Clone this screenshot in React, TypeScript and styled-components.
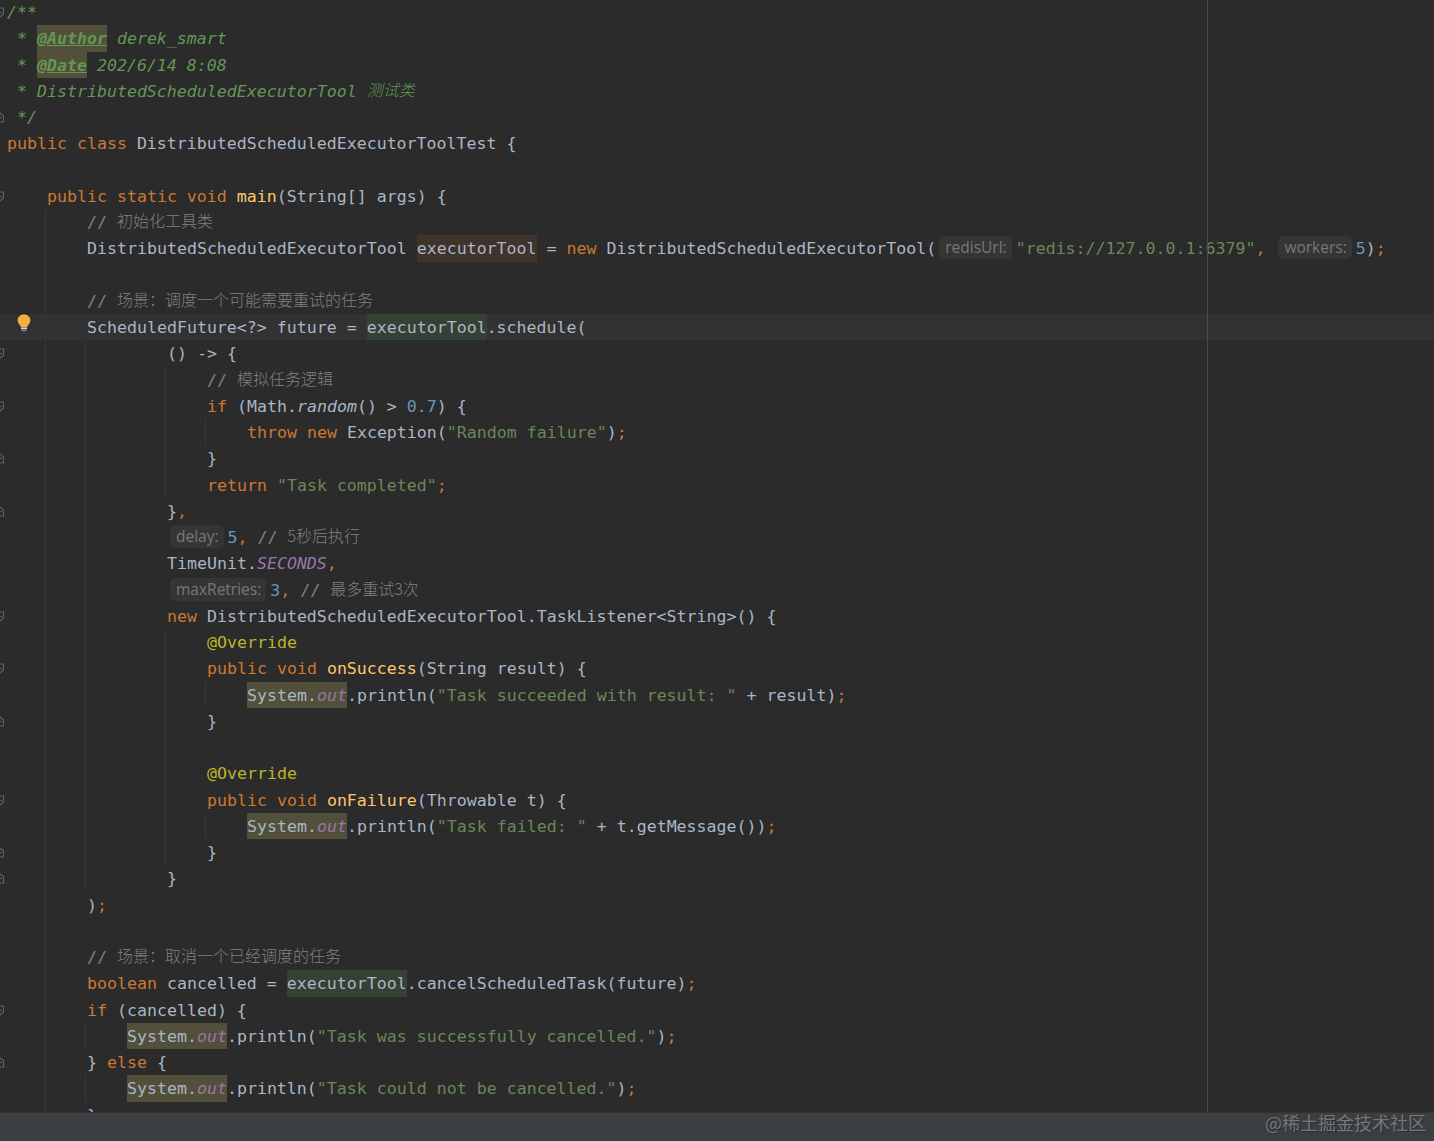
import React from 'react';
import styled, { createGlobalStyle, css } from 'styled-components';

const LINE_HEIGHT = 26.25;
const CHAR_WIDTH = 10;

type Kind =
  | 'plain'
  | 'kw'
  | 'str'
  | 'com'
  | 'cjk'
  | 'doc'
  | 'docTag'
  | 'docCjk'
  | 'num'
  | 'fn'
  | 'ann'
  | 'stat'
  | 'ital'
  | 'hint';
type Mark = 'read' | 'write' | 'search';
type Seg = [Kind, string, Mark?];

interface CodeLine {
  indent?: number;
  segs?: Seg[];
  current?: boolean;
}

const cjkFont = css`
  font-family: 'Noto Sans CJK SC', sans-serif;
  font-size: 16px;
  font-weight: 300;
  line-height: 23.75px;
`;

const kindStyles: Record<Exclude<Kind, 'hint'>, ReturnType<typeof css>> = {
  plain: css`color: #a9b7c6;`,
  kw: css`color: #cc7832;`,
  str: css`color: #6a8759;`,
  com: css`color: #808080;`,
  cjk: css`
    color: #808080;
    ${cjkFont}
  `,
  doc: css`
    color: #629755;
    font-style: italic;
  `,
  docTag: css`
    color: #629755;
    font-style: italic;
    font-weight: 700;
    text-decoration: underline;
  `,
  docCjk: css`
    color: #629755;
    font-style: italic;
    ${cjkFont}
  `,
  num: css`color: #6897bb;`,
  fn: css`color: #ffc66d;`,
  ann: css`color: #bbb529;`,
  stat: css`
    color: #9876aa;
    font-style: italic;
  `,
  ital: css`
    color: #a9b7c6;
    font-style: italic;
  `,
};

const markColors: Record<Mark, string> = {
  read: '#344134',
  write: '#40332b',
  search: '#52503a',
};

const GlobalStyle = createGlobalStyle`
  html, body, #root {
    margin: 0;
    height: 100%;
    background: #2b2b2b;
  }
`;

const Page = styled.div`
  display: flex;
  flex-direction: column;
  height: 100vh;
  overflow: hidden;
`;

const Editor = styled.main`
  position: relative;
  flex: 1;
  min-height: 0;
  overflow: hidden;
  background: #2b2b2b;
`;

const Code = styled.div`
  margin-top: -1px;
  font-family: 'DejaVu Sans Mono', monospace;
  font-size: 16.6px;
`;

// indent guides are painted as 1px stripes behind the text
const guideStripes = (xs: number[]) =>
  xs.length
    ? `background-image: ${xs.map(() => 'linear-gradient(#363636, #363636)').join(', ')};
       background-size: 1px 100%;
       background-repeat: no-repeat;
       background-position: ${xs.map((x) => `${x}px 0`).join(', ')};`
    : '';

const Line = styled.div<{ $current?: boolean; $guides: number[] }>`
  position: relative;
  display: flex;
  height: ${LINE_HEIGHT}px;
  line-height: 27px;
  white-space: pre;
  background-color: ${(p) => (p.$current ? '#323232' : 'transparent')};
  ${(p) => guideStripes(p.$guides)}
`;

const Gutter = styled.div`
  flex: none;
  width: 7px;
`;

const Text = styled.div<{ $indent: number }>`
  padding-left: ${(p) => p.$indent * CHAR_WIDTH}px;
`;

const Token = styled.span<{ $kind: Exclude<Kind, 'hint'>; $mark?: Mark }>`
  display: inline-block;
  height: ${LINE_HEIGHT}px;
  vertical-align: top;
  ${(p) => kindStyles[p.$kind]}
  ${(p) => p.$mark && `background-color: ${markColors[p.$mark]};`}
`;

const Hint = styled.span`
  display: inline-block;
  height: 23px;
  line-height: 22px;
  margin: 1px 4px 0 3px;
  padding: 0 5px 0 6px;
  vertical-align: top;
  border-radius: 5px;
  background: #353535;
  color: #787878;
  font-family: 'Open Sans', sans-serif;
  font-size: 15.5px;
`;

const FoldIcon = styled.svg`
  position: absolute;
  top: 8px;
  left: -5px;
  width: 10px;
  height: 11px;
  fill: none;
  stroke: #626262;
  stroke-width: 1.1;
`;

const BulbIcon = styled.svg`
  position: absolute;
  top: 0;
  left: 17px;
  width: 14px;
  height: 19px;
`;

const MarginLine = styled.div`
  position: absolute;
  top: 0;
  bottom: 0;
  left: 1207px;
  width: 1px;
  background: #4b4b4b;
`;

const StatusBar = styled.footer`
  display: flex;
  flex: none;
  justify-content: flex-end;
  height: 28px;
  padding-right: 8px;
  border-top: 1px solid #313335;
  background: #3c3f41;
`;

const Watermark = styled.span`
  color: #74787a;
  font-family: 'Noto Sans CJK SC', sans-serif;
  font-size: 18px;
  line-height: 18px;
  text-shadow: 1px 1px 1px #2c2e30;
`;

const comma: Seg = ['kw', ','];
const semi: Seg = ['kw', ';'];
const sysOut: Seg[] = [
  ['plain', 'System.', 'search'],
  ['stat', 'out', 'search'],
];

const lines: CodeLine[] = [
  { segs: [['doc', '/**']] },
  { indent: 1, segs: [['doc', '* '], ['docTag', '@Author', 'search'], ['doc', ' derek_smart']] },
  { indent: 1, segs: [['doc', '* '], ['docTag', '@Date', 'search'], ['doc', ' 202/6/14 8:08']] },
  { indent: 1, segs: [['doc', '* DistributedScheduledExecutorTool '], ['docCjk', '测试类']] },
  { indent: 1, segs: [['doc', '*/']] },
  { segs: [['kw', 'public class '], ['plain', 'DistributedScheduledExecutorToolTest {']] },
  {},
  {
    indent: 4,
    segs: [['kw', 'public static void '], ['fn', 'main'], ['plain', '(String[] args) {']],
  },
  { indent: 8, segs: [['com', '// '], ['cjk', '初始化工具类']] },
  {
    indent: 8,
    segs: [
      ['plain', 'DistributedScheduledExecutorTool '],
      ['plain', 'executorTool', 'write'],
      ['plain', ' = '],
      ['kw', 'new '],
      ['plain', 'DistributedScheduledExecutorTool('],
      ['hint', 'redisUrl:'],
      ['str', '"redis://127.0.0.1:6379"'],
      comma,
      ['plain', ' '],
      ['hint', 'workers:'],
      ['num', '5'],
      ['plain', ')'],
      semi,
    ],
  },
  {},
  { indent: 8, segs: [['com', '// '], ['cjk', '场景：调度一个可能需要重试的任务']] },
  {
    indent: 8,
    current: true,
    segs: [
      ['plain', 'ScheduledFuture<?> future = '],
      ['plain', 'executorTool', 'read'],
      ['plain', '.schedule('],
    ],
  },
  { indent: 16, segs: [['plain', '() -> {']] },
  { indent: 20, segs: [['com', '// '], ['cjk', '模拟任务逻辑']] },
  {
    indent: 20,
    segs: [
      ['kw', 'if '],
      ['plain', '(Math.'],
      ['ital', 'random'],
      ['plain', '() > '],
      ['num', '0.7'],
      ['plain', ') {'],
    ],
  },
  {
    indent: 24,
    segs: [['kw', 'throw new '], ['plain', 'Exception('], ['str', '"Random failure"'], ['plain', ')'], semi],
  },
  { indent: 20, segs: [['plain', '}']] },
  { indent: 20, segs: [['kw', 'return '], ['str', '"Task completed"'], semi] },
  { indent: 16, segs: [['plain', '}'], comma] },
  {
    indent: 16,
    segs: [['hint', 'delay:'], ['num', '5'], comma, ['com', ' // '], ['cjk', '5秒后执行']],
  },
  { indent: 16, segs: [['plain', 'TimeUnit.'], ['stat', 'SECONDS'], comma] },
  {
    indent: 16,
    segs: [['hint', 'maxRetries:'], ['num', '3'], comma, ['com', ' // '], ['cjk', '最多重试3次']],
  },
  {
    indent: 16,
    segs: [['kw', 'new '], ['plain', 'DistributedScheduledExecutorTool.TaskListener<String>() {']],
  },
  { indent: 20, segs: [['ann', '@Override']] },
  {
    indent: 20,
    segs: [['kw', 'public void '], ['fn', 'onSuccess'], ['plain', '(String result) {']],
  },
  {
    indent: 24,
    segs: [
      ...sysOut,
      ['plain', '.println('],
      ['str', '"Task succeeded with result: "'],
      ['plain', ' + result)'],
      semi,
    ],
  },
  { indent: 20, segs: [['plain', '}']] },
  {},
  { indent: 20, segs: [['ann', '@Override']] },
  {
    indent: 20,
    segs: [['kw', 'public void '], ['fn', 'onFailure'], ['plain', '(Throwable t) {']],
  },
  {
    indent: 24,
    segs: [
      ...sysOut,
      ['plain', '.println('],
      ['str', '"Task failed: "'],
      ['plain', ' + t.getMessage())'],
      semi,
    ],
  },
  { indent: 20, segs: [['plain', '}']] },
  { indent: 16, segs: [['plain', '}']] },
  { indent: 8, segs: [['plain', ')'], semi] },
  {},
  { indent: 8, segs: [['com', '// '], ['cjk', '场景：取消一个已经调度的任务']] },
  {
    indent: 8,
    segs: [
      ['kw', 'boolean '],
      ['plain', 'cancelled = '],
      ['plain', 'executorTool', 'read'],
      ['plain', '.cancelScheduledTask(future)'],
      semi,
    ],
  },
  { indent: 8, segs: [['kw', 'if '], ['plain', '(cancelled) {']] },
  {
    indent: 12,
    segs: [...sysOut, ['plain', '.println('], ['str', '"Task was successfully cancelled."'], ['plain', ')'], semi],
  },
  { indent: 8, segs: [['plain', '} '], ['kw', 'else '], ['plain', '{']] },
  {
    indent: 12,
    segs: [...sysOut, ['plain', '.println('], ['str', '"Task could not be cancelled."'], ['plain', ')'], semi],
  },
  { indent: 8, segs: [['plain', '}']] },
];

const foldOpen = [0, 7, 13, 15, 23, 25, 30, 38];
const foldClose = [4, 17, 19, 27, 32, 33, 40];

const inRange = (n: number, from: number, to: number) => n >= from && n <= to;

const guidesFor = (n: number) => {
  const xs: number[] = [];
  if (n >= 8) xs.push(45);
  if (inRange(n, 13, 33) || n === 39 || n === 41) xs.push(85);
  if (inRange(n, 14, 18) || inRange(n, 24, 32)) xs.push(165);
  if (n === 16 || n === 26 || n === 31) xs.push(205);
  return xs;
};

const Fold = ({ up }: { up?: boolean }) => (
  <FoldIcon viewBox="0 0 10 11">
    <path d={up ? 'M1.5 10V4L5 1l3.5 3v6z' : 'M1.5 1v6L5 10l3.5-3V1z'} />
    <path d="M3 5.5h4" />
  </FoldIcon>
);

const Bulb = () => (
  <BulbIcon viewBox="0 0 14 19">
    <path
      d="M7 .5C3.3.5.6 3 .6 6.3c0 2.4 1.4 3.600 2.400 5 .5.7.7 1.300.8 1.900h6.400c.1-.6.3-1.200.8-1.900 1-1.400 2.400-2.600 2.400-5C13.400 3 10.700.5 7 .5z"
      fill="#f4af3d"
    />
    <rect x="4" y="13.500" width="6" height="1.500" fill="#d8d8e0" />
    <rect x="4.200" y="15.200" width="5.600" height="2" fill="#7a6ea8" />
    <rect x="5.200" y="17.200" width="3.600" height="1.300" fill="#4d4a68" />
  </BulbIcon>
);

const renderSeg = ([kind, text, mark]: Seg, i: number) =>
  kind === 'hint' ? (
    <Hint key={i}>{text}</Hint>
  ) : (
    <Token key={i} $kind={kind} $mark={mark}>
      {text}
    </Token>
  );

const App = () => (
  <Page>
    <GlobalStyle />
    <Editor>
      <Code>
        {lines.map((line, n) => (
          <Line key={n} $current={line.current} $guides={guidesFor(n)}>
            <Gutter>
              {foldOpen.includes(n) && <Fold />}
              {foldClose.includes(n) && <Fold up />}
              {line.current && <Bulb />}
            </Gutter>
            <Text $indent={line.indent ?? 0}>{line.segs?.map(renderSeg)}</Text>
          </Line>
        ))}
      </Code>
      <MarginLine />
    </Editor>
    <StatusBar>
      <Watermark>@稀土掘金技术社区</Watermark>
    </StatusBar>
  </Page>
);

export default App;
